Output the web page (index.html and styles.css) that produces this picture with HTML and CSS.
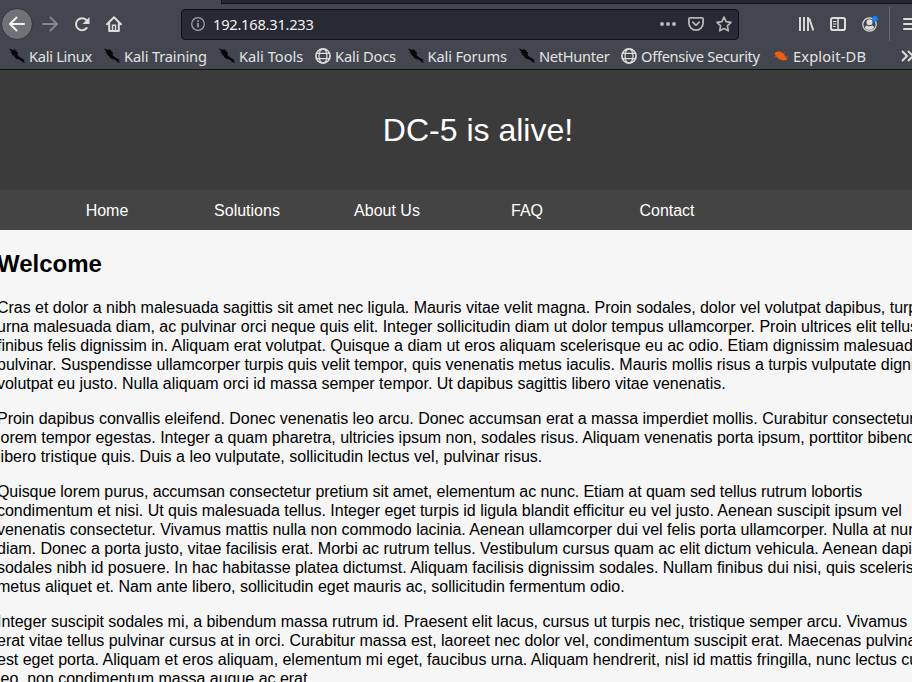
FILE: index.html
```html
<!DOCTYPE html>
<html lang="en">
<head>
<meta charset="utf-8">
<title>DC-5 is alive!</title>
<link rel="stylesheet" href="styles.css">
</head>
<body>
<svg class="defs" width="0" height="0">
  <symbol id="kali" viewBox="0 0 16 16"><path d="M0 .5l2.500.8 1 .7L6 1l-.3 1.500L7.500 2l-.3 1.500L9 4.500 8.500 6l.5 1.800 2.500 1.700L14 11l1.800 1-1.300.3L16 15l-3-1.300-2-2L8 11 5.500 9.500 5 8 2.500 6.500 3.500 6 1 4l1.700.2z" fill="#050607"/></symbol>
  <symbol id="globe" viewBox="0 0 16 16"><g fill="none" stroke="#dcdcda" stroke-width="1.200"><circle cx="8" cy="8" r="7.100" stroke-width="1.700"/><ellipse cx="8" cy="8" rx="4" ry="7"/><path d="M1.500 5.300h13M1.500 10.700h13"/></g></symbol>
</svg>
<div class="browser">
  <div class="tabs"><div class="tabs-rest"></div></div>
  <div class="toolbar">
    <div class="back"><svg width="18" height="18" viewBox="0 0 18 18"><path d="M16 9H2.500M8.500 2.500L2 9l6.500 6.500" fill="none" stroke="#eeeeec" stroke-width="2" stroke-linecap="round" stroke-linejoin="round"/></svg></div>
    <svg class="forward" width="18" height="18" viewBox="0 0 18 18"><path d="M2 9h13.500M9.500 2.500L16 9l-6.500 6.500" fill="none" stroke="#85868b" stroke-width="2" stroke-linecap="round" stroke-linejoin="round"/></svg>
    <svg class="reload" width="16" height="16" viewBox="0 0 16 16"><path d="M12.700 12A6 6 0 1 1 12.300 4" fill="none" stroke="#dcdcda" stroke-width="2" stroke-linecap="round"/><path d="M15.500 1v7H8.500z" fill="#dcdcda"/></svg>
    <svg class="home" width="16" height="16" viewBox="0 0 16 16"><path d="M1 8.200L8 1.200l7 7M3.200 7.500V15h9.600V7.500" fill="none" stroke="#dcdcda" stroke-width="2" stroke-linecap="round" stroke-linejoin="round"/><path d="M6.500 15V9.300h3V15" fill="none" stroke="#dcdcda" stroke-width="1.400"/></svg>
    <div class="urlbar">
      <svg width="14" height="14" viewBox="0 0 14 14"><circle cx="7" cy="7" r="6.300" fill="none" stroke="#a6a6a9" stroke-width="1.200"/><path d="M7 6v4.500M7 3.300v1.600" stroke="#a6a6a9" stroke-width="1.600"/></svg>
      <span class="url">192.168.31.233</span>
      <svg class="dots" width="16" height="16" viewBox="0 0 16 16"><g fill="#b5b5b7"><circle cx="2" cy="8" r="2"/><circle cx="8" cy="8" r="2"/><circle cx="14" cy="8" r="2"/></g></svg>
      <svg class="pocket" width="16" height="16" viewBox="0 0 16 16"><g fill="none" stroke="#b5b5b7" stroke-width="1.800" stroke-linejoin="round" stroke-linecap="round"><path d="M2 1.900h12a1.100 1.100 0 0 1 1.100 1.100v4a7.100 7.100 0 0 1-14.200 0V3A1.100 1.100 0 0 1 2 1.900z"/><path d="M4.800 6.200L8 9.300l3.200-3.100"/></g></svg>
      <svg class="star" width="16" height="16" viewBox="0 0 16 16"><path d="M8 1.100l2.100 4.500 4.900.7-3.600 3.500.9 5L8 12.500l-4.300 2.300.9-5L1 6.300l4.900-.7z" fill="none" stroke="#b5b5b7" stroke-width="1.700" stroke-linejoin="round"/></svg>
    </div>
    <svg class="library" width="16" height="16" viewBox="0 0 16 16"><path d="M2 1v14M6 1v14M10 1v14M11.300 2.500l4 12" fill="none" stroke="#dcdcda" stroke-width="1.900"/></svg>
    <svg class="sidebar" width="16" height="16" viewBox="0 0 16 16"><g fill="none" stroke="#dcdcda"><rect x="1" y="2" width="14" height="12" rx="1.800" stroke-width="2"/><path d="M8 2v12" stroke-width="1.500"/><path d="M3 5.500h3.500M3 8h3.500M3 10.500h2.500"/></g></svg>
    <svg class="account" width="16" height="16" viewBox="0 0 16 16"><circle cx="7.500" cy="8.500" r="6.700" fill="none" stroke="#dcdcda" stroke-width="1.200"/><circle cx="7.500" cy="6.300" r="3" fill="#dcdcda"/><path d="M3 12c.2-2 1.500-2.700 2.500-2.300 1.200.7 2.800.7 4 0 1-.4 2.300.3 2.500 2.300a6 6 0 0 1-9 0z" fill="#dcdcda"/><circle cx="13" cy="2.700" r="2.800" fill="#0a84ff"/></svg>
    <div class="divider"></div>
    <svg class="menu" width="16" height="16" viewBox="0 0 16 16"><path d="M1 3h14M1 8h14M1 13h14" stroke="#dcdcda" stroke-width="2" stroke-linecap="round"/></svg>
  </div>
  <div class="bookmarks">
    <div class="bookmark narrow"><svg><use href="#kali"/></svg>Kali Linux</div>
    <div class="bookmark"><svg><use href="#kali"/></svg>Kali Training</div>
    <div class="bookmark regular"><svg><use href="#kali"/></svg>Kali Tools</div>
    <div class="bookmark"><svg><use href="#globe"/></svg>Kali Docs</div>
    <div class="bookmark"><svg><use href="#kali"/></svg>Kali Forums</div>
    <div class="bookmark narrow"><svg><use href="#kali"/></svg>NetHunter</div>
    <div class="bookmark narrow"><svg><use href="#globe"/></svg>Offensive Security</div>
    <div class="bookmark wide"><svg viewBox="0 0 16 16"><path d="M1.500 5l3-1.500L8 4l3 2 1.500 3L14 12l-3.500.5L6 11 3 8.500z" fill="#ec5e10"/><path d="M1 9l4-1M7 4L6 2.500M10 5.500l2-1M12 9l3-.5M12 10h3M8 11l-1 1.500" stroke="#b85a34" stroke-width=".8" fill="none"/></svg>Exploit-DB</div>
    <svg class="more" width="16" height="16" viewBox="0 0 16 16"><path d="M2 3l5 5-5 5M8 3l5 5-5 5" fill="none" stroke="#dcdcda" stroke-width="2"/></svg>
  </div>
</div>
<div class="page">
  <header class="banner">DC-5 is alive!</header>
  <nav class="nav"><a>Home</a><a>Solutions</a><a>About Us</a><a>FAQ</a><a>Contact</a></nav>
  <main class="body">
    <h2>Welcome</h2>
    <p>Cras et dolor a nibh malesuada sagittis sit amet nec ligula. Mauris vitae velit magna. Proin sodales, dolor vel volutpat dapibus, turpis<br>urna malesuada diam, ac pulvinar orci neque quis elit. Integer sollicitudin diam ut dolor tempus ullamcorper. Proin ultrices elit tellus,<br>finibus felis dignissim in. Aliquam erat volutpat. Quisque a diam ut eros aliquam scelerisque eu ac odio. Etiam dignissim malesuada<br>pulvinar. Suspendisse ullamcorper turpis quis velit tempor, quis venenatis metus iaculis. Mauris mollis risus a turpis vulputate dignissim<br>volutpat eu justo. Nulla aliquam orci id massa semper tempor. Ut dapibus sagittis libero vitae venenatis.</p>
    <p>Proin dapibus convallis eleifend. Donec venenatis leo arcu. Donec accumsan erat a massa imperdiet mollis. Curabitur consectetur<br>lorem tempor egestas. Integer a quam pharetra, ultricies ipsum non, sodales risus. Aliquam venenatis porta ipsum, porttitor bibendum<br><span class="loose">libero tristique quis. Duis a leo vulputate, sollicitudin lectus vel, pulvinar risus.</span></p>
    <p><span class="tight">Quisque lorem purus, accumsan consectetur pretium sit amet, elementum ac nunc. Etiam at quam sed tellus rutrum lobortis</span><br>condimentum et nisi. Ut quis malesuada tellus. Integer eget turpis id ligula blandit efficitur eu vel justo. Aenean suscipit ipsum vel<br>venenatis consectetur. Vivamus mattis nulla non commodo lacinia. Aenean ullamcorper dui vel felis porta ullamcorper. Nulla at nunc<br>diam. Donec a porta justo, vitae facilisis erat. Morbi ac rutrum tellus. Vestibulum cursus quam ac elit dictum vehicula. Aenean dapibus<br>sodales nibh id posuere. In hac habitasse platea dictumst. Aliquam facilisis dignissim sodales. Nullam finibus dui nisi, quis scelerisque<br>metus aliquet et. Nam ante libero, sollicitudin eget mauris ac, sollicitudin fermentum odio.</p>
    <p><span class="snug">Integer suscipit sodales mi, a bibendum massa rutrum id. Praesent elit lacus, cursus ut turpis nec, tristique semper arcu. Vivamus sed</span><br>erat vitae tellus pulvinar cursus at in orci. Curabitur massa est, laoreet nec dolor vel, condimentum suscipit erat. Maecenas pulvinar<br>est eget porta. Aliquam et eros aliquam, elementum mi eget, faucibus urna. Aliquam hendrerit, nisl id mattis fringilla, nunc lectus cursus<br>leo, non condimentum massa augue ac erat.</p>
  </main>
</div>
</body>
</html>
```
FILE: styles.css
```css
* { box-sizing: border-box; }
html, body { margin: 0; height: 682px; overflow: hidden; }
body { background: #f6f6f6; font-family: "Liberation Sans", Arial, sans-serif; font-size: 16px; color: #000; }
.defs { position: absolute; }
svg { display: block; flex: none; }
.browser { height: 70px; background: #43464f; border-bottom: 1px solid #101114; overflow: hidden; font-family: "Noto Sans", sans-serif; }
.tabs { height: 4px; padding-left: 221px; }
.tabs-rest { height: 4px; background: #242730; border-bottom: 1px solid #101217; border-left: 1px solid #15171c; }
.toolbar { height: 40px; display: flex; align-items: center; width: 940px; }
.back { width: 32px; height: 32px; margin-left: 1px; flex: none; border-radius: 50%; background: #717277; border: 1px solid #33353a; display: flex; align-items: center; justify-content: center; }
.forward { margin-left: 8px; }
.reload { margin-left: 15px; }
.home { margin-left: 16px; }
.urlbar { width: 558px; height: 31px; margin-left: 59px; padding: 0 6px 0 9px; flex: none; display: flex; align-items: center; background: #272935; border: 1px solid #101116; border-radius: 4px; }
.url { margin-left: 8px; color: #f1f1f0; font-size: 14.67px; line-height: 20px; letter-spacing: -.24px; }
.dots { margin-left: auto; }
.pocket, .star { margin-left: 12px; }
.library { margin-left: 59px; }
.sidebar, .account { margin-left: 16px; }
.divider { width: 1px; height: 34px; margin-left: 11px; background: #696b71; }
.menu { margin-left: 13px; }
.bookmarks { height: 24px; display: grid; grid-template-columns: 95px 115px 96px 92.500px 111.500px 102px 152px 127px 16px; align-items: center; width: 930px; padding-left: 9px; }
.bookmark { display: flex; align-items: center; gap: 4px; white-space: nowrap; color: #e3e3e1; font-size: 14.67px; line-height: 20px; letter-spacing: -.15px; }
.bookmark svg { width: 16px; height: 16px; }
.narrow { letter-spacing: -.3px; }
.regular { letter-spacing: 0; }
.wide { letter-spacing: .15px; }
.page { width: 960px; margin-left: -2px; white-space: nowrap; }
.banner { height: 120px; line-height: 120px; background: #3b3b3b; color: #fff; font-size: 32px; text-align: center; }
.nav { height: 40px; line-height: 42px; padding-left: 39px; display: flex; background: #444; color: #fff; }
.nav a { width: 140px; text-align: center; }
.body { line-height: 19px; margin-left: -1px; }
h2 { margin: 0; padding: 20px 0; font-size: 24px; line-height: 28px; }
p { margin: 0 0 16px; letter-spacing: -.022px; }
.loose { letter-spacing: .012px; }
.tight { letter-spacing: -.084px; }
.snug { letter-spacing: -.042px; }
```
